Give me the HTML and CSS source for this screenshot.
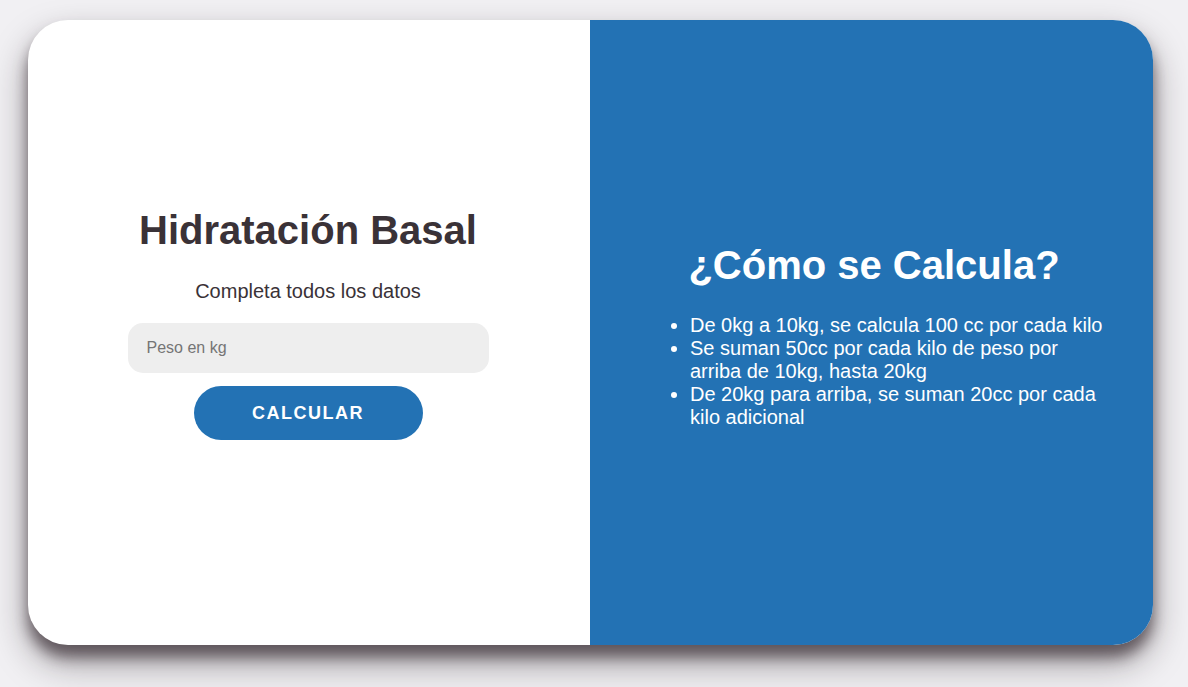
FILE: index.html
```html
<!DOCTYPE html>
<html lang="es">
<head>
<meta charset="utf-8">
<title>Hidratación Basal</title>
<link rel="stylesheet" href="styles.css">
</head>
<body>
<main class="card">
  <section class="panel panel-form">
    <h1 class="title">Hidratación Basal</h1>
    <p class="subtitle">Completa todos los datos</p>
    <input class="field" type="text" placeholder="Peso en kg">
    <button class="btn" type="button">CALCULAR</button>
  </section>
  <section class="panel panel-info">
    <h2 class="info-title">¿Cómo se Calcula?</h2>
    <ul class="info-list">
      <li>De 0kg a 10kg, se calcula 100 cc por cada kilo</li>
      <li>Se suman 50cc por cada kilo de peso por arriba de 10kg, hasta 20kg</li>
      <li>De 20kg para arriba, se suman 20cc por cada kilo adicional</li>
    </ul>
  </section>
</main>
</body>
</html>
```
FILE: styles.css
```css
* { box-sizing: border-box; }
html, body { height: 100%; }
body {
  margin: 0;
  padding: 20px 35px 42px 28px;
  background: #f1f0f3;
  font-family: "Liberation Sans", Arial, sans-serif;
}
.card {
  display: grid;
  grid-template-columns: 562px 1fr;
  width: 1125px;
  height: 625px;
  border-radius: 40px;
  overflow: hidden;
  background: #fff;
  box-shadow: 0 18px 36px rgba(30, 20, 25, 0.4), 0 12px 14px rgba(40, 25, 35, 0.55);
}
.panel {
  display: flex;
  flex-direction: column;
  justify-content: center;
  align-items: center;
}
.panel-form { padding: 0 2px 17px 0; }
.title {
  margin: 0;
  font-size: 40px;
  font-weight: bold;
  color: #3a3237;
}
.subtitle {
  margin: 27px 0 20px;
  font-size: 20px;
  color: #3a3237;
}
.field {
  width: 361px;
  height: 50px;
  border: none;
  border-radius: 15px;
  background: #eeeeee;
  padding: 0 19px;
  font-family: inherit;
  font-size: 16px;
  color: #333;
  outline: none;
}
.field::placeholder { color: #757575; }
.btn {
  margin-top: 13px;
  width: 229px;
  height: 54px;
  border: none;
  border-radius: 27px;
  background: #2372b4;
  color: #fff;
  font-family: inherit;
  font-size: 18px;
  font-weight: bold;
  letter-spacing: 1.5px;
}
.panel-info {
  background: #2372b4;
  color: #fff;
  padding: 6px 45px 0 50px;
  align-items: stretch;
}
.info-title {
  margin: 0 0 26px;
  text-align: center;
  font-size: 40px;
  font-weight: bold;
}
.info-list {
  margin: 0;
  padding-left: 50px;
  font-size: 20px;
  line-height: 23px;
}
```
